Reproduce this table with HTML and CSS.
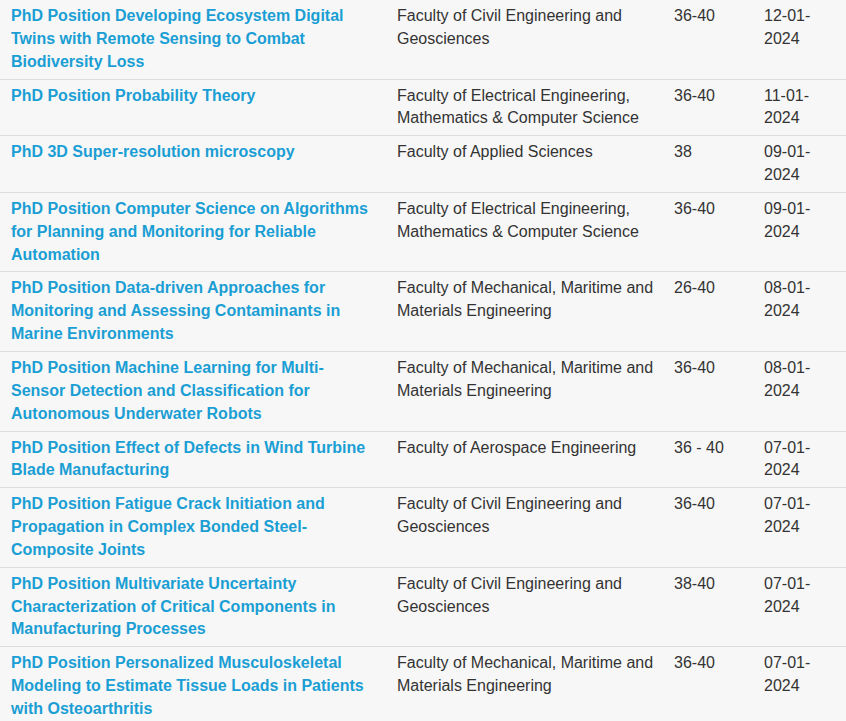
FILE: index.html
```html
<!DOCTYPE html>
<html lang="en">
<head>
  <meta charset="UTF-8">
  <title>PhD vacancies</title>
  <link rel="stylesheet" href="styles.css">
</head>
<body>

  <table class="jobs">
    <colgroup>
      <col class="col-title">
      <col class="col-faculty">
      <col class="col-hours">
      <col class="col-date">
    </colgroup>
    <tbody>
      <tr>
        <td><a href="#">PhD Position Developing Ecosystem Digital Twins with Remote Sensing to Combat Biodiversity Loss</a></td>
        <td>Faculty of Civil Engineering and Geosciences</td>
        <td>36-40</td>
        <td>12-01-2024</td>
      </tr>
      <tr>
        <td><a href="#">PhD Position Probability Theory</a></td>
        <td>Faculty of Electrical Engineering, Mathematics &amp; Computer Science</td>
        <td>36-40</td>
        <td>11-01-2024</td>
      </tr>
      <tr>
        <td><a href="#">PhD 3D Super-resolution microscopy</a></td>
        <td>Faculty of Applied Sciences</td>
        <td>38</td>
        <td>09-01-2024</td>
      </tr>
      <tr>
        <td><a href="#">PhD Position Computer Science on Algorithms for Planning and Monitoring for Reliable Automation</a></td>
        <td>Faculty of Electrical Engineering, Mathematics &amp; Computer Science</td>
        <td>36-40</td>
        <td>09-01-2024</td>
      </tr>
      <tr>
        <td><a href="#">PhD Position Data-driven Approaches for Monitoring and Assessing Contaminants in Marine Environments</a></td>
        <td>Faculty of Mechanical, Maritime and Materials Engineering</td>
        <td>26-40</td>
        <td>08-01-2024</td>
      </tr>
      <tr>
        <td><a href="#">PhD Position Machine Learning for Multi-Sensor Detection and Classification for Autonomous Underwater Robots</a></td>
        <td>Faculty of Mechanical, Maritime and Materials Engineering</td>
        <td>36-40</td>
        <td>08-01-2024</td>
      </tr>
      <tr>
        <td><a href="#">PhD Position Effect of Defects in Wind Turbine Blade Manufacturing</a></td>
        <td>Faculty of Aerospace Engineering</td>
        <td>36 - 40</td>
        <td>07-01-2024</td>
      </tr>
      <tr>
        <td><a href="#">PhD Position Fatigue Crack Initiation and Propagation in Complex Bonded Steel-Composite Joints</a></td>
        <td>Faculty of Civil Engineering and Geosciences</td>
        <td>36-40</td>
        <td>07-01-2024</td>
      </tr>
      <tr>
        <td><a href="#">PhD Position Multivariate Uncertainty Characterization of Critical Components in Manufacturing Processes</a></td>
        <td>Faculty of Civil Engineering and Geosciences</td>
        <td>38-40</td>
        <td>07-01-2024</td>
      </tr>
      <tr>
        <td><a href="#">PhD Position Personalized Musculoskeletal Modeling to Estimate Tissue Loads in Patients with Osteoarthritis</a></td>
        <td>Faculty of Mechanical, Maritime and Materials Engineering</td>
        <td>36-40</td>
        <td>07-01-2024</td>
      </tr>
    </tbody>
  </table>

</body>
</html>
```

FILE: styles.css
```css
*{
  margin: 0;
  padding: 0;
  box-sizing: border-box;
}

body{
  background-color: #f7f7f7;
  color: #333333;
  font: 16px/1.42857 "Liberation Sans", Arial, sans-serif;
}

.jobs{
  width: 846px;
  table-layout: fixed;
  border-collapse: collapse;
}

.col-title{
  width: 387px;
}
.col-faculty{
  width: 277px;
}
.col-hours{
  width: 90px;
}
.col-date{
  width: 92px;
}

.jobs td{
  padding: 5px 6px 5px 10px;
  vertical-align: top;
  border-top: 1px solid #dddddd;
}

.jobs tr:first-child td{
  border-top: none;
}

.jobs td:first-child{
  padding-left: 11px;
  padding-right: 12px;
}

.jobs td:last-child{
  padding-right: 12px;
}

.jobs a{
  color: #1a9ed4;
  font-weight: bold;
  text-decoration: none;
}
```
